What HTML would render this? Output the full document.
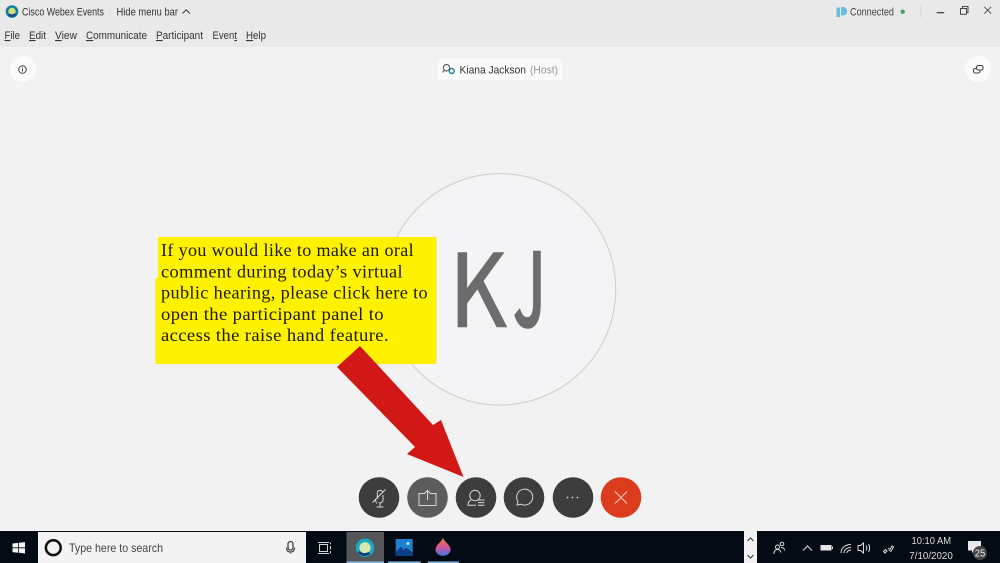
<!DOCTYPE html>
<html lang="en">
<head>
<meta charset="utf-8">
<title>Cisco Webex Events</title>
<style>
html,body{margin:0;padding:0;width:1000px;height:563px;overflow:hidden;background:#f2f2f2;}
svg{position:absolute;left:0;top:0;display:block;}
text{font-family:"Liberation Sans",Arial,sans-serif;}
text.serif{font-family:"Liberation Serif",serif;font-size:17.5px;letter-spacing:.35px;fill:#1c1a00;}
text.t{font-size:11px;fill:#333;}
text.kj{font-family:"Noto Sans CJK JP","Liberation Sans",sans-serif;fill:#6c6c6e;stroke:#6c6c6e;}
tspan.u{text-decoration:underline;}
</style>
</head>
<body>
<svg width="1000" height="563" viewBox="0 0 1000 563">
  <rect width="1000" height="563" fill="#f2f2f2"/>
  <rect width="1000" height="47" fill="#e9e9e9"/>

  <!-- title bar -->
  <circle cx="12" cy="11.500" r="5" fill="#d3e07a" stroke="#0f7f9c" stroke-width="2.600"/>
  <path d="M8.500 14.500a5 5 0 0 0 7-.5" fill="none" stroke="#164b8c" stroke-width="2.600"/>
  <text class="t" x="22" y="15.500" textLength="82" lengthAdjust="spacingAndGlyphs">Cisco Webex Events</text>
  <line x1="110" y1="5" x2="110" y2="18" stroke="#dedede"/>
  <text class="t" x="116.500" y="15.500" textLength="61.500" lengthAdjust="spacingAndGlyphs">Hide menu bar</text>
  <path d="M182.500 13.500l3.700-3.700 3.700 3.700" fill="none" stroke="#333" stroke-width="1"/>

  <path d="M836.500 7.500h3.500v9.500h-3.500zM841 7h2a3 3 0 0 1 0 8.500h-2z" fill="#6cbce0"/>
  <text class="t" x="850" y="15.500" textLength="44" lengthAdjust="spacingAndGlyphs" style="fill:#444">Connected</text>
  <circle cx="902.700" cy="11.700" r="2.200" fill="#4f9e58"/>
  <line x1="920.700" y1="5" x2="920.700" y2="18" stroke="#dcdcdc"/>
  <rect x="936.700" y="12" width="7.500" height="1.300" fill="#444"/>
  <path d="M960.500 8.500h6v5.800h-6zM962.500 8.500v-2h5.500v6h-1.500" fill="none" stroke="#444" stroke-width="1"/>
  <path d="M984.300 6.800l6.800 6.800M991.100 6.800l-6.800 6.800" fill="none" stroke="#555" stroke-width="1"/>

  <!-- menu -->
  <text class="t" x="4.500" y="39" textLength="15.500" lengthAdjust="spacingAndGlyphs"><tspan class="u">F</tspan>ile</text>
  <text class="t" x="29" y="39" textLength="17" lengthAdjust="spacingAndGlyphs"><tspan class="u">E</tspan>dit</text>
  <text class="t" x="55" y="39" textLength="22" lengthAdjust="spacingAndGlyphs"><tspan class="u">V</tspan>iew</text>
  <text class="t" x="86" y="39" textLength="61" lengthAdjust="spacingAndGlyphs"><tspan class="u">C</tspan>ommunicate</text>
  <text class="t" x="156" y="39" textLength="47" lengthAdjust="spacingAndGlyphs"><tspan class="u">P</tspan>articipant</text>
  <text class="t" x="212.500" y="39" textLength="24.500" lengthAdjust="spacingAndGlyphs">Even<tspan class="u">t</tspan></text>
  <text class="t" x="246" y="39" textLength="20" lengthAdjust="spacingAndGlyphs"><tspan class="u">H</tspan>elp</text>

  <!-- top floating controls -->
  <circle cx="23" cy="69" r="13" fill="#fbfbfb"/>
  <circle cx="978" cy="69" r="13" fill="#fbfbfb"/>
  <circle cx="22.500" cy="69.500" r="3.800" fill="none" stroke="#444" stroke-width="1"/>
  <path d="M22.500 68.500v3M22.500 67v.8" stroke="#444" stroke-width="1"/>
  <rect x="973.500" y="68.500" width="6.500" height="4.500" rx="1.800" fill="none" stroke="#444" stroke-width="1.100"/>
  <rect x="976.500" y="65.500" width="6.500" height="4.500" rx="1.800" fill="#fbfbfb" stroke="#444" stroke-width="1.100"/>

  <rect x="438" y="59" width="124" height="21" fill="#fafafa"/>
  <circle cx="446.500" cy="67.700" r="3.200" fill="none" stroke="#555" stroke-width="1.100"/>
  <path d="M442.700 72.500c.5-1.500 1.300-2 2.300-2" fill="none" stroke="#555" stroke-width="1.100"/>
  <circle cx="451.700" cy="71" r="2.500" fill="none" stroke="#1a7f9c" stroke-width="1.400"/>
  <text class="t" x="459.500" y="73.500" textLength="66.500" lengthAdjust="spacingAndGlyphs">Kiana Jackson</text>
  <text class="t" x="530" y="73.500" textLength="28" lengthAdjust="spacingAndGlyphs" style="fill:#9a9a9a">(Host)</text>

  <!-- avatar -->
  <circle cx="500" cy="289.300" r="115.700" fill="#f4f4f6" stroke="#cdcdcd" stroke-width="1"/>
  <text class="kj" transform="translate(449.400 326.300) scale(.88 1)" style="font-size:100.500px;stroke-width:1.500px">K</text>
  <text class="kj" transform="translate(513.500 325.700) scale(.6 1)" style="font-size:99.500px;stroke-width:3.500px">J</text>

  <!-- callout -->
  <path d="M158 237H436.500V364H155.500V278H158Z" fill="#fff200"/>
  <text class="serif" x="161" y="256" textLength="253" lengthAdjust="spacingAndGlyphs">If you would like to make an oral</text>
  <text class="serif" x="161" y="277.300" textLength="242" lengthAdjust="spacingAndGlyphs">comment during today’s virtual</text>
  <text class="serif" x="161" y="298.500" textLength="267" lengthAdjust="spacingAndGlyphs">public hearing, please click here to</text>
  <text class="serif" x="161" y="319.800" textLength="223" lengthAdjust="spacingAndGlyphs">open the participant panel to</text>
  <text class="serif" x="161" y="341" textLength="228" lengthAdjust="spacingAndGlyphs">access the raise hand feature.</text>

  <!-- arrow -->
  <path d="M360 346 433 425 441 420 463.500 477 407 454 415 447 337 367Z" fill="#d21717"/>

  <!-- buttons -->
  <circle cx="379" cy="497.500" r="20.300" fill="#3d3d3d"/>
  <circle cx="427.500" cy="497.500" r="20.300" fill="#5c5c5c"/>
  <circle cx="476" cy="497.500" r="20.300" fill="#3d3d3d"/>
  <circle cx="524" cy="497.500" r="20.300" fill="#3d3d3d"/>
  <circle cx="573" cy="497.500" r="20.300" fill="#3d3d3d"/>
  <circle cx="621" cy="497.500" r="20.300" fill="#dc3c1e"/>
  <g fill="none" stroke="#d8d8d8" stroke-width="1">
    <path d="M377.300 499v-6a2.800 2.800 0 0 1 5.500-.5M383 495v5a3 3 0 0 1-4.500 2.500M375.500 499c0 2 .5 3.500 1.300 4.500M380 503.500v3M376.500 507h7M372.500 502.500l13-13"/>
    <path d="M424 493.500h-5v12h17v-12h-5M427.500 500v-9M424 494l3.500-3.500 3.500 3.500"/>
    <circle cx="475" cy="495.500" r="5.200"/>
    <path d="M471 500c-2 1-3 3-3 5.200h8M478 500h6.500M478 502.600h6.500M478 505.200h6.500"/>
    <path d="M517 505l1-3.500a8 8 0 1 1 3 2.700z"/>
    <path d="M615 491.500l12 12M627 491.500l-12 12" stroke="#f5cdbf"/>
  </g>
  <g fill="#d8d8d8">
    <circle cx="567.500" cy="497.500" r=".9"/><circle cx="572.500" cy="497.500" r=".9"/><circle cx="577.500" cy="497.500" r=".9"/>
  </g>

  <!-- taskbar -->
  <rect y="531" width="1000" height="32" fill="#050b14"/>
  <rect x="38" y="532" width="268" height="31" fill="#f3f3f3"/>
  <rect x="346.500" y="532" width="37.500" height="31" fill="#54565a"/>
  <path d="M12.500 543.500l5.700-.6v4.500h-5.700zM19 542.800l6-.7v5.300h-6zM12.500 548.200h5.700v4.500l-5.700-.6zM19 548.200h6v5.300l-6-.7z" fill="#f5f5f5"/>
  <circle cx="53.300" cy="547.700" r="7.400" fill="none" stroke="#111" stroke-width="2.500"/>
  <text x="69" y="552" textLength="94" lengthAdjust="spacingAndGlyphs" style="font-size:12px;fill:#444">Type here to search</text>
  <rect x="288" y="541.500" width="5" height="8.500" rx="2.500" fill="none" stroke="#444" stroke-width="1.300"/>
  <path d="M286.500 547.500c0 3 1.500 4.500 4 4.500s4-1.500 4-4.500M290.500 552v1.500" fill="none" stroke="#444" stroke-width="1.200"/>
  <path d="M319.500 544.500h8v7h-8zM318 542.500h11M318 553.500h11M330.500 542.500v1.800M330.500 546v3.500M330.500 551v2.500" fill="none" stroke="#d5d5d5" stroke-width="1"/>

  <circle cx="365" cy="547.700" r="7.400" fill="#d9e8b0" stroke="#17a9c4" stroke-width="3.600"/>
  <path d="M358.500 552a8.800 8.800 0 0 0 11 1" fill="none" stroke="#123f7d" stroke-width="2.800"/>
  <rect x="346.500" y="561.500" width="37.500" height="1.500" fill="#7fbbe8"/>

  <rect x="395.700" y="539" width="17" height="16.700" fill="#1f7fd0"/>
  <path d="M395.700 555.700v-4l5-5 3 3 3-2 6 5v3z" fill="#0b3f8a"/>
  <circle cx="408" cy="543.500" r="1.500" fill="#bfe3fa"/>
  <rect x="388" y="561.500" width="32.700" height="1.500" fill="#7fbbe8"/>

  <defs><linearGradient id="dg" x1="0" y1="0" x2="0" y2="1"><stop offset="0" stop-color="#f0862c"/><stop offset=".5" stop-color="#d8529c"/><stop offset="1" stop-color="#3f78e0"/></linearGradient></defs>
  <path d="M443 537.700c1.500 4.500 7.500 7 7.500 11.800a7.500 6.300 0 0 1-15 0c0-4.800 6-7.300 7.500-11.800z" fill="url(#dg)"/>
  <rect x="427.700" y="561.500" width="31.300" height="1.500" fill="#7fbbe8"/>

  <rect x="744" y="531" width="13" height="32" fill="#f1f1f1"/>
  <path d="M747.500 541l3-3 3 3M747.500 555l3 3 3-3" fill="none" stroke="#444" stroke-width="1.200"/>

  <g fill="none" stroke="#dcdcdc" stroke-width="1">
    <circle cx="777.500" cy="547" r="2"/><path d="M774 554c0-3 1-4.500 3.500-4.500s3 1.500 3.500 3"/>
    <circle cx="782" cy="544" r="1.800"/><path d="M781 547.500c2 0 3.500 1 3.500 3"/>
    <path d="M803 550.500l4.500-4.500 4.500 4.500"/>
    <path d="M841 553c0-5 4-8.500 10-8.500M844 553c0-3 2.500-5.500 7-5.500M847 553c0-1.500 1.500-3 4-3"/>
    <path d="M858 545.500h2.500l3-2.500v10l-3-2.500H858zM866 545.500c1 1.500 1 3.500 0 5M868.500 544c1.500 2.500 1.500 6 0 8"/>
    <path d="M885 553l-1.500-1.500 2-2 1.500 1.500zM888 549l1-1M889 551l3-5 1.500 1-3 5"/>
  </g>
  <rect x="820.500" y="545" width="11" height="5.500" fill="#e6e6e6"/>
  <rect x="832" y="546.500" width="1" height="2.500" fill="#dcdcdc"/>

  <text x="911.500" y="544" textLength="39.500" lengthAdjust="spacingAndGlyphs" style="font-size:10.500px;fill:#dcdcdc">10:10 AM</text>
  <text x="909.300" y="559" textLength="43.500" lengthAdjust="spacingAndGlyphs" style="font-size:10.500px;fill:#dcdcdc">7/10/2020</text>

  <path d="M968 541h13v9.500h-6.500l-2.500 2.500v-2.500H968z" fill="#e8e8e8"/>
  <circle cx="980" cy="553" r="7" fill="#444"/>
  <text x="974.800" y="556.500" textLength="10.500" lengthAdjust="spacingAndGlyphs" style="font-size:10px;fill:#eee">25</text>
</svg>
</body>
</html>
